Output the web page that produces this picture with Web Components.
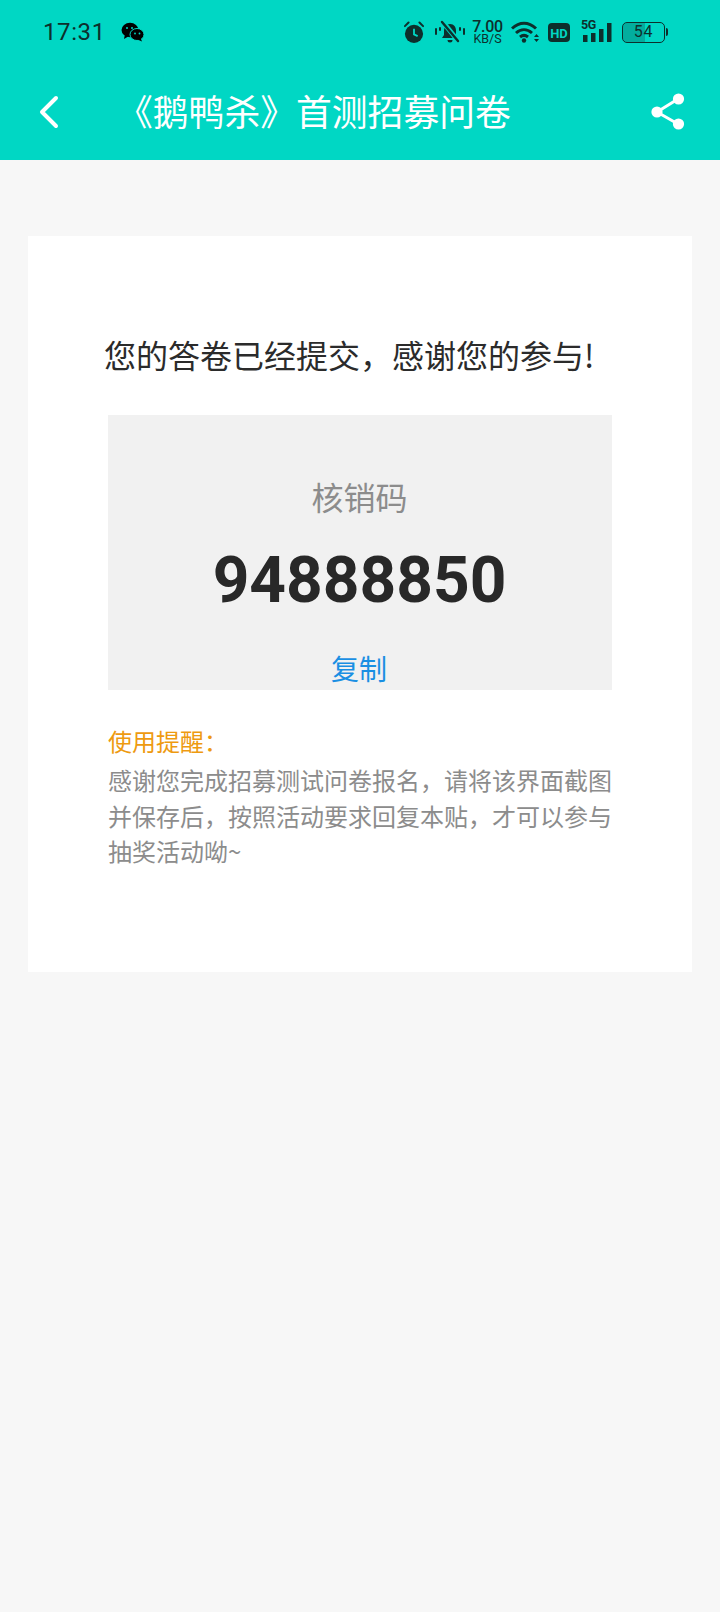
<!DOCTYPE html>
<html lang="zh">
<head>
<meta charset="utf-8">
<title>《鹅鸭杀》首测招募问卷</title>
<style>
  html, body { margin: 0; padding: 0; }
  body {
    width: 720px;
    min-height: 1612px;
    background: #f7f7f7;
    font-family: "Roboto", "Noto Sans CJK SC", sans-serif;
  }
</style>
</head>
<body>
<app-header title-text="《鹅鸭杀》首测招募问卷"></app-header>
<result-card>
  <code-box code="94888850"></code-box>
</result-card>

<script>
class AppHeader extends HTMLElement {
  constructor() {
    super();
    const shadow = this.attachShadow({ mode: 'open' });
    shadow.innerHTML = `
      <style>
        :host { display: block; background: #00d7c4; height: 160px; }
        .status {
          height: 64px;
          display: flex;
          align-items: center;
          padding: 0 0 0 43px;
          color: #0d2f2c;
        }
        .time { font: 400 24px/1 "Roboto", sans-serif; letter-spacing: 0.6px; width: 78px; }
        .right { margin-left: auto; margin-right: 52px; display: flex; align-items: center; }
        .bar {
          height: 96px;
          display: flex;
          align-items: center;
          padding: 0 0 0 38px;
          color: #fff;
        }
        .title {
          font: 400 35.800px/1 "Noto Sans CJK SC", sans-serif;
          margin-left: 57px;
          margin-top: -2px;
          white-space: nowrap;
          flex: 1;
        }
        .share { margin-right: 35px; }
        svg { display: block; flex: none; }
      </style>
      <div class="status">
        <span class="time">17:31</span>
        <svg width="24" height="22" viewBox="0 0 24 22" fill="#000">
          <ellipse cx="9" cy="9" rx="8.5" ry="7.2"/>
          <path d="M4 13l-1 5 5-3z"/>
          <ellipse cx="16" cy="13.5" rx="7" ry="6" stroke="#00d7c4" stroke-width="1"/>
          <path d="M19.5 17l1.5 3.5-4.5-2z"/>
          <circle cx="6" cy="7" r="1" fill="#00d7c4"/>
          <circle cx="11" cy="7" r="1" fill="#00d7c4"/>
          <circle cx="14" cy="12.5" r=".9" fill="#00d7c4"/>
          <circle cx="18.5" cy="12.5" r=".9" fill="#00d7c4"/>
        </svg>
        <div class="right">
          <status-icons></status-icons>
        </div>
      </div>
      <div class="bar">
        <svg width="22" height="34" viewBox="0 0 22 34" fill="none" stroke="#fff" stroke-width="4" stroke-linecap="round" stroke-linejoin="round">
          <path d="M18 3L4 17l14 14"/>
        </svg>
        <span class="title">${this.getAttribute('title-text')}</span>
        <svg class="share" width="34" height="38" viewBox="0 0 34 38" fill="#fff" stroke="#fff">
          <path d="M6 19L27 6M6 19l21 12" stroke-width="3" fill="none"/>
          <circle cx="6" cy="19" r="5.600" stroke="none"/>
          <circle cx="27.500" cy="6" r="5.600" stroke="none"/>
          <circle cx="27.500" cy="31" r="5.600" stroke="none"/>
        </svg>
      </div>
    `;
  }
}

class StatusIcons extends HTMLElement {
  constructor() {
    super();
    const shadow = this.attachShadow({ mode: 'open' });
    shadow.innerHTML = `
      <style>
        :host { display: flex; align-items: center; color: #0d2f2c; }
        svg { display: block; flex: none; }
        .speed {
          display: flex; flex-direction: column; align-items: center;
          font-family: "Roboto", sans-serif; margin: 0 9px 0 7px; width: 29px;
        }
        .speed b { font-size: 16px; line-height: 12px; font-weight: 500; letter-spacing: -0.3px; }
        .speed i { font-size: 12.500px; line-height: 11px; font-style: normal; }
        .net { position: relative; width: 31px; height: 22px; margin-left: 11px; }
        .net span { position: absolute; left: 0; top: -2px; font: 700 12.500px/11px "Roboto", sans-serif; letter-spacing: -0.5px; }
        .net svg { position: absolute; left: 0; top: 0; }
        .battery {
          position: relative;
          box-sizing: border-box;
          width: 43px; height: 21px;
          margin-left: 10px;
          border: 1.600px solid #0d2f2c;
          border-radius: 5px;
          font: 400 16px/18px "Roboto", sans-serif;
          text-align: center;
          overflow: hidden;
          letter-spacing: 0.8px;
        }
        .battery::before {
          content: "";
          position: absolute; left: 0; top: 0; bottom: 0; width: 54%;
          background: rgba(13, 47, 44, 0.25);
        }
        .battery span { position: relative; }
        .tip { width: 2px; height: 8px; background: #0d2f2c; border-radius: 0 2px 2px 0; margin-left: 1px; }
      </style>
      <svg width="20" height="23" viewBox="0 0 22 24">
        <path d="M1 5l4-4M21 5l-4-4" stroke="#0d2f2c" stroke-width="2.200" stroke-linecap="round"/>
        <circle cx="11" cy="13.500" r="10" fill="#0d2f2c"/>
        <path d="M11 8v6l4 2" stroke="#00d7c4" stroke-width="2" fill="none"/>
      </svg>
      <svg style="margin-left:10px" width="32" height="24" viewBox="0 0 32 24" fill="#0d2f2c">
        <path d="M16 4c-4 0-6 3-6 7v4l-2 3h16l-2-3v-4c0-4-2-7-6-7z"/>
        <path d="M13.500 20a2.500 2.500 0 005 0z"/>
        <path d="M2 9v5M6 8v2M26 8v2M30 9v5" stroke="#0d2f2c" stroke-width="2" stroke-linecap="round"/>
        <path d="M8 1l17 21" stroke="#00d7c4" stroke-width="5"/>
        <path d="M8 2l16 19" stroke="#0d2f2c" stroke-width="2.400" stroke-linecap="round"/>
      </svg>
      <div class="speed"><b>7.00</b><i>KB/S</i></div>
      <svg width="28" height="22" viewBox="0 0 28 22" fill="none" stroke="#0d2f2c" stroke-width="3">
        <path d="M1 7.500c7.500-7 16.500-7 24 0M5 12c5-4.500 11-4.500 16 0M9 16c2.500-2 5.500-2 8 0"/>
        <circle cx="13" cy="19.500" r="2.200" fill="#0d2f2c" stroke="none"/>
        <path d="M23 16l2.500-3 2.500 3zM23 18l2.500 3 2.500-3z" fill="#0d2f2c" stroke="none"/>
      </svg>
      <svg style="margin-left:9px" width="22" height="19" viewBox="0 0 22 19">
        <rect width="22" height="19" rx="4" fill="#0d2f2c"/>
        <text x="11" y="14.500" text-anchor="middle" font-family="Roboto, sans-serif" font-weight="700" font-size="13" fill="#00d7c4">HD</text>
      </svg>
      <div class="net">
        <span>5G</span>
        <svg width="31" height="22" viewBox="0 0 31 22" fill="#0d2f2c">
          <rect x="2" y="14" width="4.500" height="7"/>
          <rect x="10" y="12" width="4.500" height="9"/>
          <rect x="18" y="8" width="4.500" height="13"/>
          <rect x="26" y="2" width="4.500" height="19"/>
        </svg>
      </div>
      <div class="battery"><span>54</span></div>
      <div class="tip"></div>
    `;
  }
}

class ResultCard extends HTMLElement {
  constructor() {
    super();
    const shadow = this.attachShadow({ mode: 'open' });
    shadow.innerHTML = `
      <style>
        :host {
          display: block;
          box-sizing: border-box;
          width: 664px;
          height: 736px;
          margin: 76px 0 0 28px;
          padding: 0 80px;
          background: #fff;
          font-family: "Noto Sans CJK SC", sans-serif;
        }
        .msg {
          font-size: 32px;
          line-height: 48px;
          color: #2b2b2b;
          white-space: nowrap;
          padding-top: 94px;
          margin-left: -4px;
        }
        .tips { margin-top: 29px; font-size: 24px; line-height: 35.500px; color: #8c8c8c; }
        .label { color: #ee9a10; line-height: 43px; }
      </style>
      <div class="msg">您的答卷已经提交&#xFF0C;感谢您的参与!</div>
      <div style="height:37px"></div>
      <slot></slot>
      <div class="tips">
        <div class="label">使用提醒&#xFF1A;</div>
        <div>感谢您完成招募测试问卷报名&#xFF0C;请将该界面截图并保存后&#xFF0C;按照活动要求回复本贴&#xFF0C;才可以参与抽奖活动呦~</div>
      </div>
    `;
  }
}

class CodeBox extends HTMLElement {
  constructor() {
    super();
    const shadow = this.attachShadow({ mode: 'open' });
    shadow.innerHTML = `
      <style>
        :host {
          display: block;
          height: 275px;
          overflow: hidden;
          background: #f1f1f1;
          text-align: center;
          font-family: "Noto Sans CJK SC", sans-serif;
        }
        .name { font-size: 32px; line-height: 48px; color: #8c8c8c; padding-top: 57px; margin-left: -1px; }
        .code { font: 700 64px/76px "Roboto", sans-serif; color: #282828; margin-top: 23px; margin-left: -1px; }
        .copy { font-size: 28px; line-height: 40px; color: #1a8fe3; margin-top: 29px; margin-left: -2px; }
      </style>
      <div class="name">核销码</div>
      <div class="code">${this.getAttribute('code')}</div>
      <div class="copy">复制</div>
    `;
  }
}

customElements.define('status-icons', StatusIcons);
customElements.define('app-header', AppHeader);
customElements.define('result-card', ResultCard);
customElements.define('code-box', CodeBox);
</script>
</body>
</html>
